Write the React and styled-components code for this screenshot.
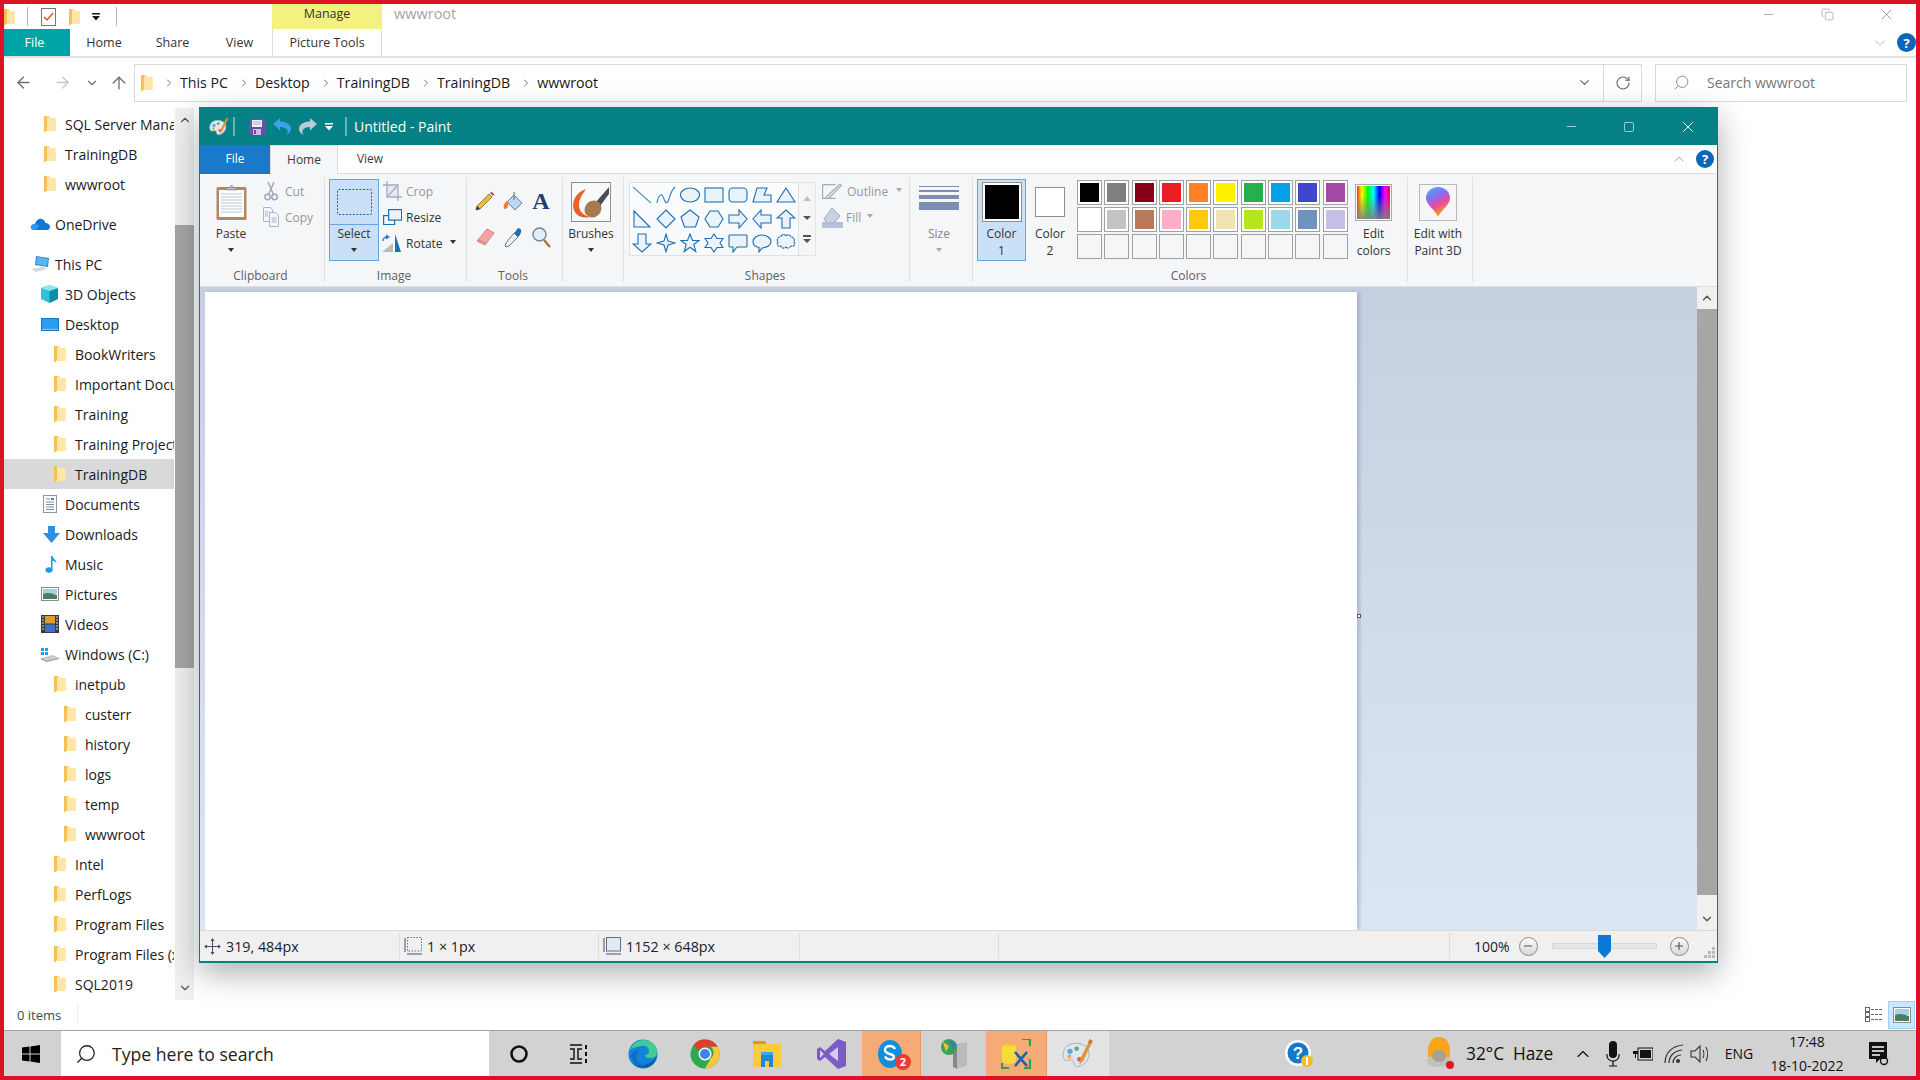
import React from 'react'
import styled, { createGlobalStyle } from 'styled-components'
import { ArrowLeft, ArrowRight, ArrowUp, ChevronDown, ChevronUp, ChevronRight, RotateCw, Search, X, Minus, Square, Copy, Plus } from 'lucide-react'

const Global = createGlobalStyle`
  html, body { margin: 0; padding: 0; width: 1920px; height: 1080px; overflow: hidden; background: #fff; }
  * { box-sizing: border-box; }
  body { font-family: "Open Sans", "Noto Sans", sans-serif; color: #1a1a1a; }
  svg { display: block; flex-shrink: 0; }
`

const Frame = styled.div`
  position: relative;
  width: 1920px;
  height: 1080px;
  border: 4px solid #dc1326;
  display: flex;
  flex-direction: column;
  overflow: hidden;
  background: #fff;
`

/* ---------- explorer chrome ---------- */
const TitleRow = styled.div`
  height: 25px;
  display: flex;
  align-items: flex-start;
  flex-shrink: 0;
`
const QuickIcon = styled.div`
  width: ${p => p.$w}px;
  height: 25px;
  display: flex;
  align-items: center;
  justify-content: center;
  overflow: hidden;
`
const QuickSep = styled.div`
  width: 1px;
  height: 19px;
  margin-top: 3px;
  background: #b5b5b5;
  margin-left: ${p => p.$ml || 0}px;
`
const Manage = styled.div`
  width: 110px;
  height: 25px;
  margin-left: ${p => p.$ml}px;
  background: #f3f17f;
  font-size: 12.5px;
  text-align: center;
  line-height: 19px;
  color: #333;
`
const ExplorerName = styled.div`
  margin-left: 12px;
  font-size: 14.5px;
  line-height: 20px;
  color: #a5a5a5;
`
const WinButtons = styled.div`
  margin-left: auto;
  display: flex;
  color: ${p => p.$light ? '#fff' : '#7d7d7d'};
`
const WinBtn = styled.div`
  width: ${p => p.$w || 59}px;
  height: ${p => p.$h || 20}px;
  display: flex;
  align-items: center;
  justify-content: center;
`
const TabRow = styled.div`
  height: 29px;
  flex-shrink: 0;
  display: flex;
  align-items: stretch;
  border-bottom: 2px solid #e2e2e2;
`
const ExpTab = styled.div`
  width: ${p => p.$w}px;
  font-size: 12.5px;
  line-height: 27px;
  text-align: center;
  padding-right: ${p => p.$active ? 5 : 0}px;
  background: ${p => p.$active ? '#00a4a6' : 'transparent'};
  color: ${p => p.$active ? '#fff' : '#333'};
  border-left: ${p => p.$boxed ? '1px solid #dcdcdc' : '0'};
  border-right: ${p => p.$boxed ? '1px solid #dcdcdc' : '0'};
`
const TabTools = styled.div`
  margin-left: auto;
  display: flex;
  align-items: center;
  color: #a8a8a8;
`
const HelpDot = styled.div`
  width: ${p => p.$size}px;
  height: ${p => p.$size}px;
  border-radius: 50%;
  margin-left: ${p => p.$ml || 0}px;
  background: #0a67bd;
  color: #fff;
  font-size: 13px;
  font-weight: 700;
  display: flex;
  align-items: center;
  justify-content: center;
`
const AddressRow = styled.div`
  height: 50px;
  flex-shrink: 0;
  display: flex;
  align-items: center;
  padding-bottom: 1px;
`
const NavBtn = styled.div`
  width: ${p => p.$w}px;
  display: flex;
  justify-content: center;
  color: ${p => p.$dim ? '#c6c6c6' : '#6f6f6f'};
`
const AddressBox = styled.div`
  width: 1508px;
  height: 38px;
  border: 1px solid #dadada;
  display: flex;
  align-items: center;
  padding-left: 5px;
  font-size: 14.2px;
`
const Crumb = styled.span`
  color: #1a1a1a;
  margin: 0 4px;
  line-height: 34px;
`
const CrumbSep = styled.span`
  color: #777;
  margin-left: ${p => p.$ml || 6}px;
  margin-right: 1px;
`
const AddrEnd = styled.div`
  margin-left: auto;
  display: flex;
  align-items: center;
  height: 100%;
  color: #666;
`
const AddrCell = styled.div`
  width: ${p => p.$w}px;
  height: 100%;
  display: flex;
  align-items: center;
  justify-content: center;
  border-left: ${p => p.$line ? '1px solid #dadada' : '0'};
`
const SearchBox = styled.div`
  width: 252px;
  height: 38px;
  margin-left: 13px;
  border: 1px solid #dadada;
  display: flex;
  align-items: center;
  padding-left: 17px;
  gap: 17px;
  color: #777;
  font-size: 14px;
`
const Mirror = styled.span`
  display: block;
  transform: scaleX(-1);
  color: ${p => p.$color || 'inherit'};
`
const ExplorerBody = styled.div`
  flex: 1;
  display: flex;
  min-height: 0;
`
const NavTree = styled.div`
  width: 171px;
  padding: 1px 1px 0 0;
  overflow: hidden;
`
const NavRow = styled.div`
  height: 30px;
  display: flex;
  align-items: center;
  white-space: nowrap;
  overflow: hidden;
  font-size: 14px;
  padding-left: ${p => p.$indent}px;
  margin-top: ${p => p.$gap || 0}px;
  background: ${p => p.$selected ? '#d9d9d9' : 'transparent'};
`
const NavIcon = styled.span`
  width: ${p => p.$slot}px;
  flex-shrink: 0;
  display: flex;
`
const ScrollTrack = styled.div`
  width: ${p => p.$w}px;
  flex-shrink: 0;
  background: #f0f0f0;
  display: flex;
  flex-direction: column;
  align-items: center;
  color: #555;
`
const ScrollArrow = styled.div`
  height: ${p => p.$h}px;
  flex-shrink: 0;
  display: flex;
  align-items: center;
  justify-content: center;
`
const ScrollThumb = styled.div`
  width: 100%;
  height: ${p => p.$h}px;
  margin-top: ${p => p.$mt}px;
  margin-bottom: auto;
  background: #a6a6a6;
`
const ExplorerStatus = styled.div`
  height: 30px;
  flex-shrink: 0;
  display: flex;
  align-items: center;
  font-size: 13px;
  padding-left: 13px;
  color: #3a4a5c;
`
const StatusText = styled.span`
  width: 61px;
  height: 20px;
  line-height: 20px;
  border-right: 1px solid #ececec;
`
const ViewButtons = styled.div`
  margin-left: auto;
  display: flex;
  align-items: center;
  gap: 3px;
  padding-right: 1px;
`
const ViewBtn = styled.div`
  width: ${p => p.$w}px;
  height: 28px;
  display: flex;
  align-items: center;
  justify-content: center;
  background: ${p => p.$active ? '#cce8ff' : 'transparent'};
  border: ${p => p.$active ? '1px solid #99d1ff' : '0'};
`

/* ---------- taskbar ---------- */
const Taskbar = styled.div`
  height: 46px;
  flex-shrink: 0;
  display: flex;
  background: #d2d2d2;
  border-top: 1px solid #a3a3a3;
`
const TaskSearch = styled.div`
  width: 428px;
  background: #fff;
  display: flex;
  align-items: center;
  padding-left: 14px;
  gap: 15px;
  font-size: 17.6px;
  color: #222;
`
const TaskSlot = styled.div`
  width: ${p => p.$w}px;
  margin-left: ${p => p.$ml || 0}px;
  padding-right: ${p => p.$pr || 0}px;
  flex-shrink: 0;
  display: flex;
  align-items: center;
  justify-content: center;
  position: relative;
  background: ${p => p.$tone === 'hot' ? '#f4ab76' : p.$tone === 'light' ? '#e3e3e3' : 'transparent'};
  border-right: ${p => p.$tone === 'hot' ? '1px solid #e89a62' : '0'};
`
const SkypeBadge = styled.span`
  position: absolute;
  left: 33px;
  top: 23px;
  width: 16px;
  height: 16px;
  border-radius: 50%;
  background: #ea3b35;
  color: #fff;
  font-size: 11px;
  font-weight: 700;
  line-height: 16px;
  text-align: center;
`
const Tray = styled.div`
  margin-left: auto;
  display: flex;
  align-items: center;
  padding-right: 15px;
  color: #111;
`
const Weather = styled.div`
  width: 102px;
  font-size: 17.3px;
  white-space: pre;
`
const TrayIcon = styled.div`
  width: ${p => p.$w || 30}px;
  display: flex;
  justify-content: center;
`
const TrayText = styled.div`
  margin-left: 11px;
  width: 36px;
  font-size: 14px;
  text-align: center;
`
const Clock = styled.div`
  width: 100px;
  text-align: center;
  font-size: 14px;
  line-height: 24px;
`

/* ---------- paint window ---------- */
const PaintWindow = styled.div`
  position: absolute;
  left: 195px;
  top: 103px;
  width: 1519px;
  height: 856px;
  display: flex;
  flex-direction: column;
  border: 1px solid #058185;
  border-bottom-width: 2px;
  box-shadow: 0 10px 30px rgba(0, 0, 0, 0.32);
  background: #fff;
`
const PaintTitle = styled.div`
  height: 37px;
  flex-shrink: 0;
  display: flex;
  align-items: center;
  background: #058185;
  color: #fff;
  font-size: 14px;
`
const TitleItem = styled.div`
  width: ${p => p.$w}px;
  margin-left: ${p => p.$ml || 0}px;
  display: flex;
  justify-content: center;
`
const TitleSep = styled.div`
  width: 2px;
  height: 19px;
  background: #6fb0b3;
  margin-left: ${p => p.$ml}px;
`
const PaintName = styled.div`
  margin-left: 7px;
`
const PaintTabs = styled.div`
  height: 29px;
  flex-shrink: 0;
  display: flex;
  border-bottom: 1px solid #dadbdc;
`
const PaintTab = styled.div`
  width: ${p => p.$w}px;
  font-size: 12px;
  line-height: 28px;
  text-align: center;
  height: 29px;
  color: ${p => p.$file ? '#fff' : '#3b3b3b'};
  background: ${p => p.$file ? '#1979ca' : p.$open ? '#f5f6f7' : 'transparent'};
  border: ${p => p.$open ? '1px solid #dadbdc' : '0'};
  border-bottom: 0;
`
const RibbonTools = styled.div`
  margin-left: auto;
  display: flex;
  align-items: center;
  padding-right: 3px;
  color: #9a9a9a;
`
const Ribbon = styled.div`
  height: 113px;
  flex-shrink: 0;
  display: flex;
  background: #f5f6f7;
  padding: 3px 0 4px;
  border-bottom: 1px solid #dcdee2;
`
const Group = styled.div`
  width: ${p => p.$w}px;
  flex-shrink: 0;
  display: flex;
  flex-direction: column;
  border-right: 1px solid #e0e1e3;
`
const GroupBody = styled.div`
  flex: 1;
  display: flex;
  align-items: flex-start;
  padding: 2px 0 0 ${p => p.$pl || 0}px;
`
const GroupLabel = styled.div`
  height: 15px;
  line-height: 18px;
  font-size: 12px;
  text-align: center;
  padding-right: 3px;
  color: #5f6066;
`
const LargeButton = styled.div`
  width: ${p => p.$w}px;
  height: 82px;
  flex-shrink: 0;
  display: flex;
  flex-direction: column;
  align-items: center;
  margin-left: ${p => p.$ml || 0}px;
  background: ${p => p.$on ? '#c9e0f7' : 'transparent'};
  outline: ${p => p.$on ? '1px solid #64a5e3' : '0'};
  outline-offset: -1px;
  font-size: 12px;
  line-height: 17px;
  text-align: center;
  color: ${p => p.$dim ? '#8a8a8a' : '#333'};
`
const LargeIcon = styled.div`
  width: 100%;
  height: 46px;
  flex-shrink: 0;
  display: flex;
  align-items: center;
  justify-content: center;
  border-bottom: ${p => p.$split ? '1px solid #64a5e3' : '0'};
`
const Caret = styled.span`
  display: block;
  width: 0;
  height: 0;
  margin: ${p => p.$block ? '6px auto 0' : '0 0 2px 3px'};
  border-left: 3.5px solid transparent;
  border-right: 3.5px solid transparent;
  border-top: 4px solid ${p => p.$dim ? '#a8a8a8' : '#333'};
`
const SmallCol = styled.div`
  display: flex;
  flex-direction: column;
  margin-left: ${p => p.$ml}px;
  margin-top: -1px;
`
const SmallTool = styled.div`
  height: 26px;
  display: flex;
  align-items: center;
  gap: ${p => p.$gap || 4}px;
  font-size: 12px;
  color: ${p => p.$dim ? '#97979c' : '#333'};
`
const IconSlot = styled.span`
  width: 20px;
  display: flex;
  justify-content: center;
`
const ToolGrid = styled.div`
  display: grid;
  grid-template-columns: repeat(3, 28px);
  grid-auto-rows: 36px;
  margin-top: 4px;
  justify-items: center;
  align-items: center;
`
const BigA = styled.span`
  font-family: "Liberation Serif", serif;
  font-weight: 700;
  font-size: 24px;
  line-height: 24px;
  color: #1f3f70;
`
const ShapeGallery = styled.div`
  width: 170px;
  height: 74px;
  margin-top: 3px;
  display: grid;
  grid-template-columns: repeat(7, 24px);
  grid-auto-rows: 24px;
  align-items: center;
  justify-items: center;
  border: 1px solid #dfe0e3;
  background: linear-gradient(#fbfcfd, #f7f9fb);
`
const GalleryScroll = styled.div`
  width: 17px;
  height: 74px;
  margin-top: 3px;
  border: 1px solid #e3e4e6;
  border-left: 0;
  display: flex;
  flex-direction: column;
  align-items: center;
  justify-content: space-around;
  padding: 5px 0;
`
const GalleryArrow = styled.span`
  display: block;
  width: 0;
  height: 0;
  border-left: 4px solid transparent;
  border-right: 4px solid transparent;
  ${p => p.$up ? `border-bottom: 5px solid #c0c0c0;` : `border-top: 4px solid #555;`}
`
const GalleryMore = styled.span`
  display: block;
  width: 8px;
  border-top: 2px solid #555;
  padding-top: 2px;
`
const Swatch = styled.div`
  width: ${p => p.$size}px;
  height: ${p => p.$size}px;
  background: ${p => p.$color};
  border: 1px solid #8f8f8f;
  box-shadow: inset 0 0 0 ${p => p.$ring || 0}px #fff;
`
const ColorCell = styled.div`
  width: 25px;
  height: 25px;
  border: 1px solid #a0a0a0;
  background: ${p => p.$color || 'transparent'};
  box-shadow: ${p => p.$color ? 'inset 0 0 0 2px #fff' : 'none'};
`
const Palette = styled.div`
  display: grid;
  grid-template-columns: repeat(10, 25px);
  grid-auto-rows: 25px;
  gap: 2px 2.3px;
  margin: 1px 0 0 7px;
`
const Spectrum = styled.div`
  width: 37px;
  height: 37px;
  border: 1px solid #aaa;
  box-shadow: inset 0 0 0 1px #fff;
  background:
    linear-gradient(transparent 30%, rgba(128, 128, 128, 0.95)),
    linear-gradient(90deg, #f00, #ff0, #0f0, #0ff, #00f, #f0f, #f00);
`
const PaintTile = styled.div`
  width: 38px;
  height: 37px;
  border: 1px solid #b9b9b9;
  background: #f6f6f6;
  display: flex;
  align-items: center;
  justify-content: center;
`
const Workspace = styled.div`
  flex: 1;
  min-height: 0;
  display: flex;
`
const CanvasArea = styled.div`
  flex: 1;
  padding: 5px 0 0 5px;
  background: linear-gradient(#c6cfe0, #dbe6f3);
  overflow: hidden;
`
const Canvas = styled.div`
  position: relative;
  width: 1152px;
  height: 100%;
  background: #fff;
  box-shadow: 3px 0 3px rgba(120, 130, 160, 0.35);
`
const Handle = styled.span`
  position: absolute;
  right: -4px;
  top: 322px;
  width: 4px;
  height: 4px;
  background: #fff;
  border: 1px solid #555;
`
const PaintStatus = styled.div`
  height: 31px;
  flex-shrink: 0;
  display: flex;
  background: #f0f0f0;
  border-top: 1px solid #d9d9d9;
  font-size: 14.3px;
  color: #222;
`
const StatusCell = styled.div`
  width: ${p => p.$w}px;
  flex-shrink: 0;
  display: flex;
  align-items: center;
  gap: 5px;
  padding-left: 4px;
  border-right: 1px solid #dedede;
  margin: 2px 0;
`
const ZoomArea = styled.div`
  flex: 1;
  display: flex;
  align-items: center;
  padding-left: 24px;
  font-size: 14px;
  position: relative;
`
const ZoomCircle = styled.div`
  width: 19px;
  height: 19px;
  border-radius: 50%;
  border: 1px solid #8c8c8c;
  background: linear-gradient(#fafafa, #d8d8d8);
  color: #555;
  margin-left: ${p => p.$ml}px;
  display: flex;
  align-items: center;
  justify-content: center;
`
const ZoomTrack = styled.div`
  position: relative;
  width: 105px;
  height: 6px;
  margin-left: 14px;
  background: #e3e8e6;
  border: 1px solid #d4d8d6;
`
const ZoomThumb = styled.svg`
  position: absolute;
  left: 45px;
  top: -9px;
`
const Grip = styled.svg`
  position: absolute;
  right: 1px;
  bottom: 2px;
`

/* ---------- drawings ---------- */
const Folder = () => (
  <svg width="13" height="18" viewBox="0 0 13 18">
    <path d="M1 1h5l1 2h5.500v13H3l-2 1.500z" fill="#fcdc8e" />
    <path d="M1 1h3v14.500l-3 2z" fill="#f3c156" />
    <path d="M4 3h8.500v13H4z" fill="#fde6a8" />
  </svg>
)
const OneDriveIcon = () => (
  <svg width="20" height="14" viewBox="0 0 20 14">
    <path d="M4 13C1 13 0 10 1.500 8.500 2.500 7 4 7 5 7 6 3 9 1 12 2c2 .7 3 2 3.500 4C18 6 20 8 20 10s-1.500 3-3 3z" fill="#0f78d4" />
    <path d="M5 7c2 0 3 1 4 2l-3 4H4C1 13 0 10 1.500 8.500 2.500 7 4 7 5 7z" fill="#2a9af0" />
  </svg>
)
const ThisPCIcon = () => (
  <svg width="20" height="18" viewBox="0 0 20 18">
    <path d="M6 1l13 2-1 9-13-2z" fill="#2f86d0" />
    <path d="M7 2l11 2-1 7-11-2z" fill="#59b4ef" />
    <path d="M1 14l12-2 4 2-11 3z" fill="#d5d7da" />
  </svg>
)
const CubeIcon = () => (
  <svg width="17" height="18" viewBox="0 0 17 18">
    <path d="M8.500 0L17 3v11l-8.500 4L0 14V3z" fill="#2fc1d6" />
    <path d="M8.500 6L17 3v11l-8.500 4z" fill="#0d8ea8" />
    <path d="M8.500 0L17 3 8.500 6 0 3z" fill="#8de6f0" />
  </svg>
)
const DesktopIcon = () => (
  <svg width="18" height="13" viewBox="0 0 18 13">
    <rect width="18" height="13" fill="#0f79d0" />
    <rect x="1" y="1" width="16" height="9" fill="#2c9df0" />
    <rect x="1" y="10.500" width="16" height="1.500" fill="#7cc3f5" />
  </svg>
)
const DocsIcon = () => (
  <svg width="14" height="18" viewBox="0 0 14 18">
    <rect x=".5" y=".5" width="13" height="17" fill="#fdfdfd" stroke="#8d96a0" />
    <path d="M3 4h4M3 7h8M3 9.500h8M3 12h8M3 14.500h8" stroke="#7d8da0" />
    <path d="M8 3h3v2H8z" fill="#3a8dd8" />
  </svg>
)
const DownloadIcon = () => (
  <svg width="17" height="17" viewBox="0 0 17 17">
    <path d="M5 0h7v7h5l-8.500 10L0 7h5z" fill="#2f8fe0" />
  </svg>
)
const MusicIcon = () => (
  <svg width="12" height="18" viewBox="0 0 12 18">
    <ellipse cx="4" cy="15" rx="3.500" ry="2.700" fill="#1a9ae0" />
    <path d="M6 1h1.500c.5 3 4 3.500 4 7.500-1-1.700-2.500-2.500-4-2.700V15H6z" fill="#1a9ae0" />
  </svg>
)
const PicturesIcon = () => (
  <svg width="18" height="14" viewBox="0 0 18 14">
    <rect x=".5" y=".5" width="17" height="13" fill="#fff" stroke="#8d8d8d" />
    <rect x="2" y="2" width="14" height="5" fill="#a8cfe8" />
    <path d="M2 7c4-2 8-1 14 1v4H2z" fill="#4c7d5e" />
  </svg>
)
const VideosIcon = () => (
  <svg width="18" height="18" viewBox="0 0 18 18">
    <rect width="18" height="18" fill="#3a3a3a" />
    <rect x="4" y="1" width="10" height="7.500" fill="#e59a2e" />
    <rect x="4" y="9.500" width="10" height="7.500" fill="#3f6fcf" />
    <path d="M1 2h2M1 5h2M1 8h2M1 11h2M1 14h2M15 2h2M15 5h2M15 8h2M15 11h2M15 14h2" stroke="#ddd" />
  </svg>
)
const DriveIcon = () => (
  <svg width="20" height="15" viewBox="0 0 20 15">
    <path d="M1 11l12-3 6 3-12 3z" fill="#c7c9cc" />
    <path d="M1 11v1.500L7 15l12-3v-1L7 14z" fill="#8f9397" />
    <path d="M1 1h3v3H1zM5 1h3v3H5zM1 5h3v3H1zM5 5h3v3H5z" fill="#1ba1e2" />
  </svg>
)

const PaletteIcon = ({ size = 22 }) => (
  <svg width={size} height={size} viewBox="0 0 24 24">
    <path d="M10 4C4 4 0 9 1 14c.7 3.500 3 3 5 2.500s3 .5 3 2.500 2 3 4.500 2C18 19.500 21 15 20 10 19 6 15 4 10 4z" fill="#dfe6ee" stroke="#9fb0bf" strokeWidth=".7" />
    <circle cx="6" cy="10" r="2" fill="#54a9e8" />
    <circle cx="11" cy="8" r="1.700" fill="#58b368" />
    <circle cx="5.500" cy="14" r="1.600" fill="#e8b13a" />
    <circle cx="13" cy="16" r="1.700" fill="#e5584f" />
    <path d="M21 1l2 1-7 15-3 3 .5-4z" fill="#e2913a" />
    <path d="M20.500 1l2.500 1.200-1 2.300-2.500-1.200z" fill="#b9803c" />
  </svg>
)
const SaveIcon = () => (
  <svg width="16" height="16" viewBox="0 0 16 16">
    <rect width="16" height="16" rx="1" fill="#6b4fa8" />
    <rect x="3" y="1" width="10" height="7" fill="#f2eefa" />
    <path d="M4 3h8M4 5h8" stroke="#b9a9dc" />
    <rect x="4" y="10" width="8" height="6" fill="#c8bde0" />
    <rect x="5" y="11" width="2" height="4" fill="#6b4fa8" />
  </svg>
)
const ArcArrow = ({ color, flip }) => (
  <svg width="18" height="17" viewBox="0 0 18 17" style={flip ? { transform: 'scaleX(-1)' } : undefined}>
    <path d="M0 6l7-6v3.500c6 0 11 3 11 7.500 0 3-2.500 5-5 6 1.500-1.500 2-3 1.500-4.500C13.500 10 10.500 9 7 9v3.500z" fill={color} />
  </svg>
)
const DropBar = () => (
  <svg width="8" height="8" viewBox="0 0 8 8">
    <path d="M0 0h8v1.500H0zM0 3h8L4 7.500z" fill="currentColor" />
  </svg>
)
const ClipboardIcon = () => (
  <svg width="31" height="36" viewBox="0 0 31 36">
    <rect x="0.500" y="3" width="30" height="33" rx="1.500" fill="#b08a5c" />
    <rect x="3" y="6" width="25" height="27" fill="#fff" />
    <path d="M5 10h21M5 13h21M5 16h21M5 19h21M5 22h21M5 25h21M5 28h21" stroke="#bcc6d2" />
    <path d="M10 6V3.500h3.500L15.500 1l2 2.500H21V6z" fill="#aeb5bd" stroke="#777" strokeWidth=".6" />
  </svg>
)
const ScissorsIcon = () => (
  <svg width="14" height="20" viewBox="0 0 14 20" fill="none" stroke="#9aa5b8" strokeWidth="1.400">
    <circle cx="3.500" cy="16" r="2.700" />
    <circle cx="10.500" cy="16" r="2.700" />
    <path d="M4.500 13.500L10 1M9.500 13.500L4 1" />
  </svg>
)
const CopyIcon = () => (
  <svg width="16" height="20" viewBox="0 0 16 20" fill="#f4f6f9" stroke="#a9b5c6">
    <path d="M.5.500h7l2 2v12h-9z" />
    <path d="M6.500 5.500h6l3 3v11h-9z" />
    <path d="M8.500 11h5M8.500 13h5M8.500 15h5M2 5h3M2 7h3M2 9h3" />
  </svg>
)
const MarqueeIcon = () => (
  <svg width="35" height="26" viewBox="0 0 35 26">
    <rect x=".5" y=".5" width="34" height="25" rx="1" fill="#c9e0f7" stroke="#1f5fa8" strokeDasharray="2 1.500" />
  </svg>
)
const CropIcon = () => (
  <svg width="19" height="20" viewBox="0 0 19 20" fill="none" stroke="#a2acc0" strokeWidth="1.300">
    <rect x="4" y="4" width="11" height="12" fill="#e6ebf3" stroke="none" />
    <path d="M4 0v16h15M0 4h15v16" />
    <path d="M4 16L15 4" />
  </svg>
)
const ResizeIcon = () => (
  <svg width="19" height="16" viewBox="0 0 19 16">
    <rect x=".6" y="6.600" width="11" height="9" fill="#f5f6f7" stroke="#1f6db2" strokeWidth="1.200" />
    <rect x="5.600" y=".6" width="13" height="10.500" fill="#eaf3fb" stroke="#1f6db2" strokeWidth="1.200" />
  </svg>
)
const RotateIcon = () => (
  <svg width="20" height="19" viewBox="0 0 20 19">
    <path d="M0 18L11 9v9z" fill="#bdbdbd" />
    <path d="M13 0l6 18h-6z" fill="#1f6db2" />
    <path d="M1 7c0-3 2-4 4-4" fill="none" stroke="#1f7ad0" strokeWidth="1.300" />
    <path d="M4 .5L8 3 4 5.500z" fill="#1f7ad0" />
  </svg>
)
const PencilIcon = () => (
  <svg width="20" height="20" viewBox="0 0 20 20">
    <path d="M14 3l3 3L5 18l-4 1 1-4z" fill="#edb93f" stroke="#7a6a38" strokeWidth=".8" />
    <path d="M15 2l1.500-1.500 3 3L18 5z" fill="#c0504d" />
    <path d="M1 19l1-4 3 3z" fill="#333" />
  </svg>
)
const BucketIcon = () => (
  <svg width="20" height="21" viewBox="0 0 20 21">
    <path d="M11 4l8 8-7 7-8-8z" fill="#bcd7f0" stroke="#5b7fa6" />
    <path d="M11 1v8" stroke="#777" strokeWidth="1.200" />
    <path d="M4 10c-3 2-4 5-3 8 2 0 4-1 4-3 0-1 0-2 1-3z" fill="#ee7a2e" />
  </svg>
)
const EraserIcon = () => (
  <svg width="20" height="18" viewBox="0 0 20 18">
    <path d="M12 1l7 4-9 12-8-4z" fill="#f4a3a3" stroke="#d78080" />
    <path d="M2 13l8 4 1.500-2-8-4z" fill="#e58b8b" />
  </svg>
)
const DropperIcon = () => (
  <svg width="20" height="21" viewBox="0 0 20 21">
    <path d="M11 6l4 4-9 9-3 1-1-1 1-3z" fill="#eef2f6" stroke="#6d7a86" />
    <path d="M11 6l4 4 2-2 1-3c1-3-2-5-4-3l-1 2z" fill="#1f6db2" />
  </svg>
)
const LensIcon = () => (
  <svg width="19" height="21" viewBox="0 0 19 21" fill="none">
    <circle cx="7.500" cy="7.500" r="6.500" fill="#e4eef8" stroke="#75828f" strokeWidth="1.400" />
    <path d="M12 13l6 7" stroke="#a3793a" strokeWidth="2.400" />
  </svg>
)
const BrushesIcon = () => (
  <svg width="40" height="40" viewBox="0 0 40 40">
    <rect x=".5" y=".5" width="39" height="39" fill="#f9f9f9" stroke="#8f8f8f" />
    <path d="M38 5L25 20l4 4L38 12z" fill="#4a4d55" />
    <path d="M15 7C5 10 0 20 3 28c2 6 9 9 16 7-7-2-11-6-11-12 0-6 3-10 7-16z" fill="#e9602a" />
    <ellipse cx="22" cy="27" rx="8" ry="9" fill="#a57b4d" transform="rotate(45 22 27)" />
  </svg>
)
const OutlineIcon = () => (
  <svg width="20" height="16" viewBox="0 0 20 16" fill="none" stroke="#a2acc0" strokeWidth="1.200">
    <path d="M.6 1.600h13M.6 1.600v13.800h13" />
    <path d="M18 1l1.500 1.500L7 15l-3 1 1-3z" fill="#e3e8f0" />
  </svg>
)
const FillIcon = () => (
  <svg width="21" height="21" viewBox="0 0 21 21">
    <rect y="15" width="21" height="6" fill="#b3c2d8" />
    <path d="M10 1l8 8-6 7H5L2 12z" fill="#c7d2e2" stroke="#a2acc0" />
  </svg>
)
const SizeIcon = () => (
  <svg width="40" height="33" viewBox="0 0 40 33">
    <rect y="0" width="40" height="1" fill="#7d8fb0" />
    <rect y="4" width="40" height="2" fill="#7d8fb0" />
    <rect y="9" width="40" height="4" fill="#7d8fb0" />
    <rect y="16" width="40" height="8" fill="#7d8fb0" />
  </svg>
)
const Drop3D = () => (
  <svg width="26" height="32" viewBox="0 0 26 32">
    <defs>
      <linearGradient id="drop3d" x1="0" y1="0" x2="0.4" y2="1">
        <stop offset="0" stopColor="#35c6e8" />
        <stop offset=".4" stopColor="#8a6cf0" />
        <stop offset=".7" stopColor="#ec4a9a" />
        <stop offset="1" stopColor="#f7a31c" />
      </linearGradient>
    </defs>
    <path d="M13 1c7 0 12 5 12 11 0 7-8 11-12 19C10 23 1 19 1 12 1 6 6 1 13 1z" fill="url(#drop3d)" />
  </svg>
)

const stroke = { fill: '#eaf3fa', stroke: '#1f6db2', strokeWidth: 1.1 }
const shapePaths = [
  <path d="M1 2l18 16" fill="none" stroke="#5a93c5" strokeWidth="1.100" />,
  <path d="M1 18c2-10 5-10 7-4s4 4 5 0 3-9 6-12" fill="none" stroke="#3b82bf" strokeWidth="1.100" />,
  <ellipse cx="10" cy="10" rx="9.500" ry="7" {...stroke} />,
  <rect x="1" y="3" width="18" height="14" {...stroke} />,
  <rect x="1" y="3" width="18" height="14" rx="4" {...stroke} />,
  <path d="M1 17L5 3h10l-3 7h7v7z" {...stroke} />,
  <path d="M10 3l9 14H1z" {...stroke} />,
  <path d="M2 2l16 16H2z" {...stroke} />,
  <path d="M10 1l9 9-9 9-9-9z" {...stroke} />,
  <path d="M10 1l9 7-3.500 10h-11L1 8z" {...stroke} />,
  <path d="M6 2h8l5 8-5 8H6l-5-8z" {...stroke} />,
  <path d="M1 6h10V1l8 9-8 9v-5H1z" {...stroke} />,
  <path d="M19 6H9V1l-8 9 8 9v-5h10z" {...stroke} />,
  <path d="M6 19V9H1l9-8 9 8h-5v10z" {...stroke} />,
  <path d="M6 1v10H1l9 8 9-8h-5V1z" {...stroke} />,
  <path d="M10 1l2 7 7 2-7 2-2 7-2-7-7-2 7-2z" {...stroke} />,
  <path d="M10 1l2.500 6.500H19l-5.200 4 2 7-5.800-4.200L4.200 18.500l2-7L1 7.500h6.500z" {...stroke} />,
  <path d="M10 1l3 4.500h6L16 10l3 4.500h-6L10 19l-3-4.500H1L4 10 1 5.500h6z" {...stroke} />,
  <path d="M2 2h16a1 1 0 0 1 1 1v10a1 1 0 0 1-1 1H9l-4 5v-5H2a1 1 0 0 1-1-1V3a1 1 0 0 1 1-1z" {...stroke} />,
  <path d="M10 2c5 0 9 3 9 6.500S15 15 10 15l-3 4v-4.500C3 14 1 11.500 1 8.500 1 5 5 2 10 2z" {...stroke} />,
  <path d="M5 3c2-2 4-2 5 0 2-2 5-1 5 1 3 0 4 3 3 5 2 2 0 5-3 4-1 2-4 3-5 1-2 2-5 1-5-1-3 1-5-2-3-4-2-2 0-5 3-6z" {...stroke} strokeDasharray="2.500 .6" />
]

const WindowsLogo = () => (
  <svg width="18" height="18" viewBox="0 0 18 18" fill="#000">
    <path d="M0 2.500l7.500-1v7H0zM8.500 1.400L18 0v8.500H8.500zM0 9.500h7.500v7l-7.500-1zM8.500 9.500H18V18l-9.500-1.400z" />
  </svg>
)
const CortanaIcon = () => (
  <svg width="20" height="20" viewBox="0 0 20 20"><circle cx="10" cy="10" r="7.500" fill="none" stroke="#111" strokeWidth="2.600" /></svg>
)
const TaskViewIcon = () => (
  <svg width="20" height="20" viewBox="0 0 20 20" fill="none" stroke="#111" strokeWidth="1.400">
    <path d="M1 1h12M1 19h12M1 5h4v10H1M13 5H9v10h4" />
    <path d="M17 1v4M17 8v4M17 15v4" strokeWidth="2" />
  </svg>
)
const EdgeIcon = () => (
  <svg width="30" height="30" viewBox="0 0 30 30">
    <circle cx="15" cy="15" r="14.500" fill="#1183d8" />
    <path d="M2 11C5 3 13-1 21 2c5 2 8 7 8 12 0 3-3 5-7 5-3 0-5-1-5-3 2 0 4-1 4-4 0-4-4-6-8-5-5 1-9 2-11 4z" fill="#3fce8f" />
    <path d="M29 17c-1 5-4 9-9 11-5 2-11 0-14-4 4 3 9 3 13 1 3-1 7-3 10-8z" fill="#0c5da8" />
    <path d="M13 10c-4 1-6 6-4 11 1 3 4 5 7 6-7 0-12-5-13-11 2-3 6-6 10-6z" fill="#0f6cbd" />
  </svg>
)
const ChromeIcon = () => (
  <svg width="30" height="30" viewBox="0 0 30 30">
    <circle cx="15" cy="15" r="14.500" fill="#2da94f" />
    <path d="M15 .5a14.500 14.500 0 0 1 12.600 7.300H15a7.200 7.200 0 0 0-6.500 4L3.600 5.900A14.500 14.500 0 0 1 15 .5z" fill="#e33b2e" />
    <path d="M27.600 7.800A14.500 14.500 0 0 1 15 29.500l6-10.500a7.200 7.200 0 0 0 0-11.200z" fill="#fcc934" />
    <circle cx="15" cy="15" r="6.500" fill="#fff" />
    <circle cx="15" cy="15" r="5" fill="#3f83ea" />
  </svg>
)
const ExplorerIcon = () => (
  <svg width="28" height="26" viewBox="0 0 28 26">
    <path d="M0 0h12l2 4H0z" fill="#d99b1c" />
    <rect y="3" width="28" height="23" fill="#fbc93d" />
    <path d="M8 26V14h12v12h-4v-6h-4v6z" fill="#1f87d8" />
    <rect x="8" y="11" width="12" height="3" fill="#3fa8ea" />
  </svg>
)
const StudioIcon = () => (
  <svg width="29" height="30" viewBox="0 0 29 30">
    <path d="M21 0l8 3v24l-8 3-13-12-5 4-3-2V10l3-2 5 4z" fill="#7b5bc6" />
    <path d="M21 8v14l-9-7z" fill="#d7c8f4" />
    <path d="M3 11v8l4-4z" fill="#d7c8f4" />
  </svg>
)
const SkypeIcon = () => (
  <svg width="28" height="30" viewBox="0 0 28 30">
    <ellipse cx="13" cy="15" rx="12" ry="14" fill="#0f8fdc" />
    <path d="M18 10c-1-2-3-3-5-3-3 0-5 1.500-5 4 0 5 9 3 9 7 0 1.500-1.500 2.500-4 2.500-2 0-4-1-5-3" fill="none" stroke="#fff" strokeWidth="2.400" />
  </svg>
)
const NetworkIcon = () => (
  <svg width="30" height="32" viewBox="0 0 30 32">
    <path d="M18 6l10-2v24l-10 3z" fill="#b8bcbf" />
    <path d="M14 6l4 0v25l-4-2z" fill="#85898c" />
    <circle cx="10" cy="9" r="8" fill="#3aa15a" />
    <path d="M4 4l6 4-3 6z" fill="#e5c33a" />
    <path d="M10 2l7 4-3 5z" fill="#3a78c8" />
  </svg>
)
const ToolsIcon = () => (
  <svg width="30" height="30" viewBox="0 0 30 30">
    <ellipse cx="8" cy="7" rx="7" ry="3" fill="#f3c33a" />
    <path d="M1 7v15c0 2 3 3 7 3s7-1 7-3V7z" fill="#f7dc35" />
    <path d="M21 0h8v7M1 24v5h7M29 20v9h-6" fill="none" stroke="#2ca14a" strokeWidth="2.200" />
    <path d="M14 13l12 14M26 13L14 27" stroke="#1a5fb4" strokeWidth="2.600" />
  </svg>
)
const HelpBadge = () => (
  <svg width="28" height="30" viewBox="0 0 28 30">
    <circle cx="13" cy="14" r="13" fill="#fff" />
    <circle cx="13" cy="14" r="10.500" fill="#1578c9" />
    <text x="13" y="20" textAnchor="middle" fontSize="17" fontWeight="700" fill="#fff" fontFamily="Liberation Sans, sans-serif">?</text>
    <circle cx="22" cy="22" r="6" fill="#f5b82e" />
    <rect x="21" y="18" width="2" height="8" fill="#fff" />
  </svg>
)
const WeatherIcon = () => (
  <svg width="28" height="34" viewBox="0 0 28 34">
    <path d="M13 0c7 0 11 6 11 14v6H2v-6C2 6 6 0 13 0z" fill="#f8a51c" />
    <ellipse cx="13" cy="24" rx="12" ry="6" fill="#c2c0bb" />
    <ellipse cx="13" cy="19" rx="7" ry="6" fill="#a89f95" />
    <circle cx="24" cy="28" r="4" fill="#e0162b" />
  </svg>
)
const MicIcon = () => (
  <svg width="14" height="26" viewBox="0 0 14 26" fill="#111">
    <rect x="3" y="0" width="8" height="17" rx="4" />
    <path d="M1 13v2c0 3 3 5 6 5s6-2 6-5v-2M7 20v5M3 25h8" fill="none" stroke="#111" strokeWidth="1.200" />
  </svg>
)
const BatteryIcon = () => (
  <svg width="20" height="18" viewBox="0 0 20 18" fill="#111">
    <rect x="5" y="3" width="15" height="12" fill="none" stroke="#111" />
    <rect x="7" y="5" width="11" height="8" />
    <path d="M1 2v4M3 2v4M0 6h5v3H3v4H2V9H0z" />
  </svg>
)
const WifiIcon = () => (
  <svg width="20" height="20" viewBox="0 0 20 20" fill="none" stroke="#333" strokeWidth="1.200">
    <path d="M1 19C1 9 8 2 19 1M5 19c0-7 5-12 13-13M9 19c0-4 3-8 8-8" />
    <circle cx="14" cy="17" r="2" fill="#333" stroke="none" />
  </svg>
)
const SpeakerIcon = () => (
  <svg width="20" height="20" viewBox="0 0 20 20" fill="none" stroke="#333" strokeWidth="1.100">
    <path d="M1 7h4l5-5v16l-5-5H1z" />
    <path d="M13 6c1 2 1 6 0 8M16 3c2 4 2 10 0 14" />
  </svg>
)
const NotifyIcon = () => (
  <svg width="22" height="24" viewBox="0 0 22 24">
    <path d="M1 0h18v17h-7l-4 4v-4H1z" fill="#111" />
    <path d="M4 5h12M4 9h12M4 13h8" stroke="#fff" strokeWidth="1.400" />
    <circle cx="16" cy="19" r="3.500" fill="none" stroke="#111" strokeWidth="1.400" />
  </svg>
)
const CheckDoc = () => (
  <svg width="15" height="18" viewBox="0 0 15 18">
    <rect x=".5" y=".5" width="14" height="17" fill="#fff" stroke="#777" />
    <path d="M3 9l3 3 6-7" fill="none" stroke="#e2502b" strokeWidth="1.500" />
  </svg>
)
const MoveIcon = () => (
  <svg width="17" height="17" viewBox="0 0 17 17" fill="#3f5068" stroke="#3f5068">
    <path d="M8.500 1v15M1 8.500h15" fill="none" />
    <path d="M8.500 0l2 3h-4zM8.500 17l2-3h-4zM0 8.500l3-2v4zM17 8.500l-3-2v4z" stroke="none" />
  </svg>
)
const SelectionSize = ({ dashed }) => (
  <svg width="18" height="18" viewBox="0 0 18 18" fill="none">
    <rect x="3.500" y=".5" width="14" height="13.500" fill={dashed ? 'none' : '#dfeaf5'} stroke="#5c7088" strokeDasharray={dashed ? '1.500 1.500' : undefined} />
    <path d="M1 1v14M3 17h15" stroke="#3f5068" />
  </svg>
)
const DetailsView = () => (
  <svg width="18" height="16" viewBox="0 0 18 16" fill="none" stroke="#666">
    <rect x=".5" y=".5" width="4" height="4" />
    <rect x=".5" y="5.500" width="4" height="4" />
    <rect x=".5" y="10.500" width="4" height="4" />
    <path d="M6 2.500h12M6 7.500h12M6 12.500h12" strokeDasharray="3 1" />
  </svg>
)
const TilesView = () => (
  <svg width="18" height="16" viewBox="0 0 18 16">
    <rect x=".5" y=".5" width="17" height="15" fill="#fff" stroke="#8b8b8b" />
    <rect x="2" y="2" width="14" height="6" fill="#a8cfe8" />
    <path d="M2 8c4-2 8-1 14 1v5H2z" fill="#4c7d5e" />
  </svg>
)

/* ---------- data ---------- */
const navRows = [
  { label: 'SQL Server Management', indent: 39, slot: 22, icon: <Folder /> },
  { label: 'TrainingDB', indent: 39, slot: 22, icon: <Folder /> },
  { label: 'wwwroot', indent: 39, slot: 22, icon: <Folder /> },
  { label: 'OneDrive', indent: 26, slot: 25, icon: <OneDriveIcon />, gap: 10 },
  { label: 'This PC', indent: 26, slot: 25, icon: <ThisPCIcon />, gap: 10 },
  { label: '3D Objects', indent: 37, slot: 24, icon: <CubeIcon /> },
  { label: 'Desktop', indent: 37, slot: 24, icon: <DesktopIcon /> },
  { label: 'BookWriters', indent: 49, slot: 22, icon: <Folder /> },
  { label: 'Important Documents', indent: 49, slot: 22, icon: <Folder /> },
  { label: 'Training', indent: 49, slot: 22, icon: <Folder /> },
  { label: 'Training Projects', indent: 49, slot: 22, icon: <Folder /> },
  { label: 'TrainingDB', indent: 49, slot: 22, icon: <Folder />, selected: true },
  { label: 'Documents', indent: 39, slot: 22, icon: <DocsIcon /> },
  { label: 'Downloads', indent: 39, slot: 22, icon: <DownloadIcon /> },
  { label: 'Music', indent: 41, slot: 20, icon: <MusicIcon /> },
  { label: 'Pictures', indent: 37, slot: 24, icon: <PicturesIcon /> },
  { label: 'Videos', indent: 37, slot: 24, icon: <VideosIcon /> },
  { label: 'Windows (C:)', indent: 36, slot: 25, icon: <DriveIcon /> },
  { label: 'inetpub', indent: 49, slot: 22, icon: <Folder /> },
  { label: 'custerr', indent: 59, slot: 22, icon: <Folder /> },
  { label: 'history', indent: 59, slot: 22, icon: <Folder /> },
  { label: 'logs', indent: 59, slot: 22, icon: <Folder /> },
  { label: 'temp', indent: 59, slot: 22, icon: <Folder /> },
  { label: 'wwwroot', indent: 59, slot: 22, icon: <Folder /> },
  { label: 'Intel', indent: 49, slot: 22, icon: <Folder /> },
  { label: 'PerfLogs', indent: 49, slot: 22, icon: <Folder /> },
  { label: 'Program Files', indent: 49, slot: 22, icon: <Folder /> },
  { label: 'Program Files (x86)', indent: 49, slot: 22, icon: <Folder /> },
  { label: 'SQL2019', indent: 49, slot: 22, icon: <Folder /> }
]
const crumbs = ['This PC', 'Desktop', 'TrainingDB', 'TrainingDB', 'wwwroot']
const colors = [
  '#000000', '#7f7f7f', '#880015', '#ed1c24', '#ff7f27', '#fff200', '#22b14c', '#00a2e8', '#3f48cc', '#a349a4',
  '#ffffff', '#c3c3c3', '#b97a57', '#ffaec9', '#ffc90e', '#efe4b0', '#b5e61d', '#99d9ea', '#7092be', '#c8bfe7',
  '', '', '', '', '', '', '', '', '', ''
]

const Explorer = () => (
  <>
    <TitleRow>
      <QuickIcon $w={11}><Folder /></QuickIcon>
      <QuickSep $ml={12} />
      <QuickIcon $w={40}><CheckDoc /></QuickIcon>
      <QuickIcon $w={12}><Folder /></QuickIcon>
      <QuickIcon $w={32}><DropBar /></QuickIcon>
      <QuickSep $ml={4} />
      <Manage $ml={155}>Manage</Manage>
      <ExplorerName>wwwroot</ExplorerName>
      <WinButtons>
        <WinBtn><Minus size={15} strokeWidth={1} /></WinBtn>
        <WinBtn><Copy size={13} strokeWidth={1} /></WinBtn>
        <WinBtn><X size={17} strokeWidth={1} /></WinBtn>
      </WinButtons>
    </TitleRow>
    <TabRow>
      <ExpTab $w={66} $active>File</ExpTab>
      <ExpTab $w={68}>Home</ExpTab>
      <ExpTab $w={69}>Share</ExpTab>
      <ExpTab $w={65}>View</ExpTab>
      <ExpTab $w={110} $boxed>Picture Tools</ExpTab>
      <TabTools>
        <ChevronDown size={18} strokeWidth={1} />
        <HelpDot $size={19} $ml={8}>?</HelpDot>
      </TabTools>
    </TabRow>
    <AddressRow>
      <NavBtn $w={39}><ArrowLeft size={19} strokeWidth={1.6} /></NavBtn>
      <NavBtn $w={38} $dim><ArrowRight size={19} strokeWidth={1.6} /></NavBtn>
      <NavBtn $w={22}><ChevronDown size={14} strokeWidth={2} /></NavBtn>
      <NavBtn $w={31}><ArrowUp size={20} strokeWidth={1.6} /></NavBtn>
      <AddressBox>
        <Folder />
        {crumbs.map((c, i) => (
          <React.Fragment key={i}>
            <CrumbSep $ml={i ? 6 : 10}><ChevronRight size={12} strokeWidth={2} /></CrumbSep>
            <Crumb>{c}</Crumb>
          </React.Fragment>
        ))}
        <AddrEnd>
          <AddrCell $w={38}><ChevronDown size={15} strokeWidth={2} /></AddrCell>
          <AddrCell $w={38} $line><RotateCw size={16} strokeWidth={1.6} /></AddrCell>
        </AddrEnd>
      </AddressBox>
      <SearchBox>
        <Mirror $color="#8a7a70"><Search size={17} strokeWidth={1.2} /></Mirror>
        Search wwwroot
      </SearchBox>
    </AddressRow>
    <ExplorerBody>
      <NavTree>
        {navRows.map((r, i) => (
          <NavRow key={i} $indent={r.indent} $gap={r.gap} $selected={r.selected}>
            <NavIcon $slot={r.slot}>{r.icon}</NavIcon>
            {r.label}
          </NavRow>
        ))}
      </NavTree>
      <ScrollTrack $w={19}>
        <ScrollArrow $h={24}><ChevronUp size={14} strokeWidth={2} /></ScrollArrow>
        <ScrollThumb $mt={93} $h={443} />
        <ScrollArrow $h={24}><ChevronDown size={14} strokeWidth={2} /></ScrollArrow>
      </ScrollTrack>
    </ExplorerBody>
    <ExplorerStatus>
      <StatusText>0 items</StatusText>
      <ViewButtons>
        <ViewBtn $w={22}><DetailsView /></ViewBtn>
        <ViewBtn $w={27} $active><TilesView /></ViewBtn>
      </ViewButtons>
    </ExplorerStatus>
  </>
)

const Paint = () => (
  <PaintWindow>
    <PaintTitle>
      <TitleItem $w={30} $ml={4}><PaletteIcon size={20} /></TitleItem>
      <TitleSep $ml={-1} />
      <TitleItem $w={18} $ml={13}><SaveIcon /></TitleItem>
      <TitleItem $w={18} $ml={7}><ArcArrow color="#3aa0e8" /></TitleItem>
      <TitleItem $w={18} $ml={8}><ArcArrow color="#b9c9d6" flip /></TitleItem>
      <TitleItem $w={8} $ml={8}><DropBar /></TitleItem>
      <TitleSep $ml={12} />
      <PaintName>Untitled - Paint</PaintName>
      <WinButtons $light>
        <WinBtn $h={37} $w={58}><Minus size={15} strokeWidth={1} /></WinBtn>
        <WinBtn $h={37} $w={58}><Square size={12} strokeWidth={1.2} /></WinBtn>
        <WinBtn $h={37} $w={59}><X size={18} strokeWidth={1.2} /></WinBtn>
      </WinButtons>
    </PaintTitle>
    <PaintTabs>
      <PaintTab $w={70} $file>File</PaintTab>
      <PaintTab $w={68} $open>Home</PaintTab>
      <PaintTab $w={64}>View</PaintTab>
      <RibbonTools>
        <ChevronUp size={16} strokeWidth={1.2} />
        <HelpDot $size={18} $ml={9}>?</HelpDot>
      </RibbonTools>
    </PaintTabs>
    <Ribbon>
      <Group $w={125}>
        <GroupBody $pl={6}>
          <LargeButton $w={50}>
            <LargeIcon><ClipboardIcon /></LargeIcon>
            Paste
            <Caret $block />
          </LargeButton>
          <SmallCol $ml={5}>
            <SmallTool $dim><IconSlot><ScissorsIcon /></IconSlot>Cut</SmallTool>
            <SmallTool $dim><IconSlot><CopyIcon /></IconSlot>Copy</SmallTool>
          </SmallCol>
        </GroupBody>
        <GroupLabel>Clipboard</GroupLabel>
      </Group>
      <Group $w={142}>
        <GroupBody $pl={4}>
          <LargeButton $w={50} $on>
            <LargeIcon $split><MarqueeIcon /></LargeIcon>
            Select
            <Caret $block />
          </LargeButton>
          <SmallCol $ml={3}>
            <SmallTool $dim><IconSlot><CropIcon /></IconSlot>Crop</SmallTool>
            <SmallTool><IconSlot><ResizeIcon /></IconSlot>Resize</SmallTool>
            <SmallTool><IconSlot><RotateIcon /></IconSlot>Rotate<Caret /></SmallTool>
          </SmallCol>
        </GroupBody>
        <GroupLabel>Image</GroupLabel>
      </Group>
      <Group $w={96}>
        <GroupBody $pl={4}>
          <ToolGrid>
            <PencilIcon />
            <BucketIcon />
            <BigA>A</BigA>
            <EraserIcon />
            <DropperIcon />
            <LensIcon />
          </ToolGrid>
        </GroupBody>
        <GroupLabel>Tools</GroupLabel>
      </Group>
      <Group $w={61}>
        <GroupBody>
          <LargeButton $w={56}>
            <LargeIcon><BrushesIcon /></LargeIcon>
            Brushes
            <Caret $block />
          </LargeButton>
        </GroupBody>
        <GroupLabel />
      </Group>
      <Group $w={286}>
        <GroupBody $pl={5}>
          <ShapeGallery>
            {shapePaths.map((p, i) => (
              <svg key={i} width="20" height="20" viewBox="0 0 20 20">{p}</svg>
            ))}
          </ShapeGallery>
          <GalleryScroll>
            <GalleryArrow $up />
            <GalleryArrow />
            <GalleryMore><GalleryArrow /></GalleryMore>
          </GalleryScroll>
          <SmallCol $ml={6}>
            <SmallTool $dim $gap={5}><OutlineIcon />Outline<Caret $dim /></SmallTool>
            <SmallTool $dim $gap={3}><FillIcon />Fill<Caret $dim /></SmallTool>
          </SmallCol>
        </GroupBody>
        <GroupLabel>Shapes</GroupLabel>
      </Group>
      <Group $w={63}>
        <GroupBody>
          <LargeButton $w={58} $dim>
            <LargeIcon><SizeIcon /></LargeIcon>
            Size
            <Caret $block $dim />
          </LargeButton>
        </GroupBody>
        <GroupLabel />
      </Group>
      <Group $w={435}>
        <GroupBody $pl={4}>
          <LargeButton $w={49} $on>
            <LargeIcon><Swatch $size={40} $color="#000" $ring={2} /></LargeIcon>
            Color<br />1
          </LargeButton>
          <LargeButton $w={40} $ml={4}>
            <LargeIcon><Swatch $size={30} $color="#fff" /></LargeIcon>
            Color<br />2
          </LargeButton>
          <Palette>
            {colors.map((c, i) => <ColorCell key={i} $color={c} />)}
          </Palette>
          <LargeButton $w={46} $ml={3}>
            <LargeIcon><Spectrum /></LargeIcon>
            Edit<br />colors
          </LargeButton>
        </GroupBody>
        <GroupLabel>Colors</GroupLabel>
      </Group>
      <Group $w={65}>
        <GroupBody>
          <LargeButton $w={60}>
            <LargeIcon><PaintTile><Drop3D /></PaintTile></LargeIcon>
            Edit with<br />Paint 3D
          </LargeButton>
        </GroupBody>
        <GroupLabel />
      </Group>
    </Ribbon>
    <Workspace>
      <CanvasArea>
        <Canvas><Handle /></Canvas>
      </CanvasArea>
      <ScrollTrack $w={20}>
        <ScrollArrow $h={22}><ChevronUp size={14} strokeWidth={2.4} /></ScrollArrow>
        <ScrollThumb $mt={0} $h={586} />
        <ScrollArrow $h={22}><ChevronDown size={14} strokeWidth={2.4} /></ScrollArrow>
      </ScrollTrack>
    </Workspace>
    <PaintStatus>
      <StatusCell $w={200}><MoveIcon />319, 484px</StatusCell>
      <StatusCell $w={199}><SelectionSize dashed />1 × 1px</StatusCell>
      <StatusCell $w={201}><SelectionSize />1152 × 648px</StatusCell>
      <StatusCell $w={199} />
      <StatusCell $w={451} />
      <ZoomArea>
        100%
        <ZoomCircle $ml={9}><Minus size={12} strokeWidth={2.4} /></ZoomCircle>
        <ZoomTrack>
          <ZoomThumb width="13" height="23" viewBox="0 0 13 23"><path d="M0 0h13v16l-6.500 7L0 16z" fill="#0a78d7" /></ZoomThumb>
        </ZoomTrack>
        <ZoomCircle $ml={13}><Plus size={12} strokeWidth={2.4} /></ZoomCircle>
        <Grip width="12" height="12" viewBox="0 0 12 12" fill="#b9b9b9">
          <path d="M8 0h3v3H8zM4 4h3v3H4zM8 4h3v3H8zM0 8h3v3H0zM4 8h3v3H4zM8 8h3v3H8z" />
        </Grip>
      </ZoomArea>
    </PaintStatus>
  </PaintWindow>
)

const Tasks = () => (
  <Taskbar>
    <TaskSlot $w={57} $pr={4}><WindowsLogo /></TaskSlot>
    <TaskSearch>
      <Mirror><Search size={22} strokeWidth={1.4} /></Mirror>
      Type here to search
    </TaskSearch>
    <TaskSlot $w={60}><CortanaIcon /></TaskSlot>
    <TaskSlot $w={60}><TaskViewIcon /></TaskSlot>
    <TaskSlot $w={68}><EdgeIcon /></TaskSlot>
    <TaskSlot $w={56}><ChromeIcon /></TaskSlot>
    <TaskSlot $w={68}><ExplorerIcon /></TaskSlot>
    <TaskSlot $w={61}><StudioIcon /></TaskSlot>
    <TaskSlot $w={59} $tone="hot"><SkypeIcon /><SkypeBadge>2</SkypeBadge></TaskSlot>
    <TaskSlot $w={65}><NetworkIcon /></TaskSlot>
    <TaskSlot $w={61} $tone="hot"><ToolsIcon /></TaskSlot>
    <TaskSlot $w={62} $tone="light"><PaletteIcon size={32} /></TaskSlot>
    <TaskSlot $w={60} $ml={160}><HelpBadge /></TaskSlot>
    <Tray>
      <TrayIcon $w={52}><WeatherIcon /></TrayIcon>
      <Weather>32°C  Haze</Weather>
      <TrayIcon><ChevronUp size={20} strokeWidth={1.4} /></TrayIcon>
      <TrayIcon><MicIcon /></TrayIcon>
      <TrayIcon><BatteryIcon /></TrayIcon>
      <TrayIcon $w={32}><WifiIcon /></TrayIcon>
      <TrayIcon $w={20}><SpeakerIcon /></TrayIcon>
      <TrayText>ENG</TrayText>
      <Clock>17:48<br />18-10-2022</Clock>
      <TrayIcon $w={44}><NotifyIcon /></TrayIcon>
    </Tray>
  </Taskbar>
)

export default function App() {
  return (
    <Frame>
      <Global />
      <Explorer />
      <Paint />
      <Tasks />
    </Frame>
  )
}
